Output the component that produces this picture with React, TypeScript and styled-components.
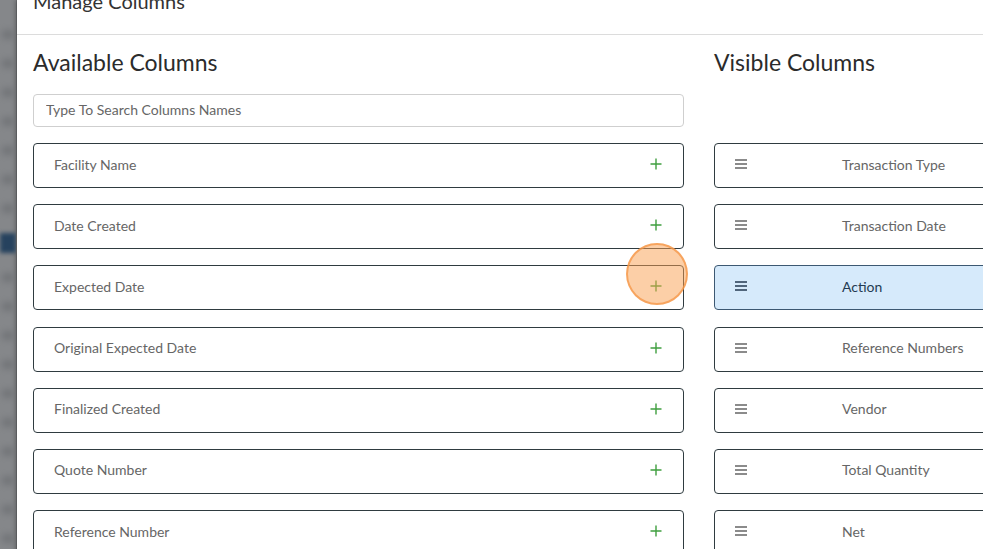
import React from "react";
import styled, { createGlobalStyle } from "styled-components";

const GlobalStyle = createGlobalStyle`
  html, body {
    margin: 0;
    padding: 0;
    height: 100%;
    overflow: hidden;
    background: #ffffff;
    font-family: Lato, "Open Sans", "Liberation Sans", sans-serif;
  }
`;

const Page = styled.div`
  display: grid;
  grid-template-columns: 17px 1fr;
  height: 549px;
  width: 983px;
  overflow: hidden;
`;

const Backdrop = styled.div`
  background: #85878a;
  border-right: 1px solid #707275;
  display: flex;
  flex-direction: column;
  gap: 20px;
  padding-top: 30px;
  overflow: hidden;
`;

const Smudge = styled.div<{ $dark?: boolean }>`
  flex: none;
  height: ${(p) => (p.$dark ? "20px" : "9px")};
  margin: ${(p) => (p.$dark ? "0" : "0 2px")};
  background: ${(p) => (p.$dark ? "#26425e" : "#6c6e72")};
  filter: blur(${(p) => (p.$dark ? "2px" : "3px")});
  opacity: ${(p) => (p.$dark ? 1 : 0.7)};
`;

const Modal = styled.div`
  background: #fff;
  box-shadow: -2px 0 4px rgba(0, 0, 0, 0.25);
  display: flex;
  flex-direction: column;
  min-width: 0;
`;

const Header = styled.div`
  height: 35px;
  box-sizing: border-box;
  border-bottom: 1px solid #dcdcdc;
  display: flex;
  align-items: flex-end;
  padding: 0 16px 21px;
`;

const Title = styled.h4`
  margin: 0;
  font-size: 20px;
  line-height: 24px;
  font-weight: 400;
  color: #333;
`;

const Body = styled.div`
  display: grid;
  grid-template-columns: 651px 651px;
  column-gap: 30px;
  padding: 13px 16px 0;
`;

const Column = styled.div`
  display: flex;
  flex-direction: column;
`;

const Heading = styled.h3`
  margin: 0;
  height: 46px;
  font-size: 23px;
  line-height: 28px;
  font-weight: 400;
  color: #2b2b2b;
`;

const Search = styled.input`
  box-sizing: border-box;
  height: 33px;
  margin-bottom: 16px;
  border: 1px solid #cfcfcf;
  border-radius: 4px;
  padding: 0 12px 3px;
  font-family: inherit;
  font-size: 14px;
  color: #555;
  outline: none;
  &::placeholder {
    color: #666;
  }
`;

const Spacer = styled.div`
  height: 49px;
`;

const List = styled.div`
  display: flex;
  flex-direction: column;
  gap: 16.2px;
`;

const Row = styled.div<{ $active?: boolean }>`
  position: relative;
  box-sizing: border-box;
  height: 45px;
  padding-bottom: 3px;
  border: 1px solid ${(p) => (p.$active ? "#3c5872" : "#2f3b40")};
  border-radius: 4px;
  background: ${(p) => (p.$active ? "#d6eafb" : "#fff")};
  display: flex;
  align-items: center;
  font-size: 14px;
  color: ${(p) => (p.$active ? "#243a52" : "#666")};
`;

const Label = styled.span`
  flex: 1;
  padding-left: 20px;
`;

const AddButton = styled.span`
  width: 54px;
  display: flex;
  justify-content: center;
`;

const Handle = styled.span`
  width: 127px;
  padding-left: 20px;
  box-sizing: border-box;
  display: flex;
  align-items: center;
`;

const Click = styled.div`
  position: absolute;
  right: -5px;
  top: -23px;
  width: 58px;
  height: 58px;
  border-radius: 50%;
  background: rgba(250, 160, 80, 0.5);
  border: 2px solid rgba(245, 150, 70, 0.75);
  pointer-events: none;
`;

const Plus = () => (
  <svg width="12" height="12" viewBox="0 0 12 12">
    <path d="M6 0.5v11M0.5 6h11" stroke="#3f9f3f" strokeWidth="1.4" />
  </svg>
);

const Bars = ({ color }: { color: string }) => (
  <svg width="12" height="10" viewBox="0 0 12 10">
    <path d="M0 1h12M0 5h12M0 9h12" stroke={color} strokeWidth="1.4" />
  </svg>
);

const available = [
  "Facility Name",
  "Date Created",
  "Expected Date",
  "Original Expected Date",
  "Finalized Created",
  "Quote Number",
  "Reference Number",
];

const visible = [
  "Transaction Type",
  "Transaction Date",
  "Action",
  "Reference Numbers",
  "Vendor",
  "Total Quantity",
  "Net",
];

export default function App() {
  return (
    <Page>
      <GlobalStyle />
      <Backdrop>
        {Array.from({ length: 18 }).map((_, i) => (
          <Smudge key={i} $dark={i === 7} />
        ))}
      </Backdrop>
      <Modal>
        <Header>
          <Title>Manage Columns</Title>
        </Header>
        <Body>
          <Column>
            <Heading>Available Columns</Heading>
            <Search placeholder="Type To Search Columns Names" />
            <List>
              {available.map((name, idx) => (
                <Row key={name}>
                  <Label>{name}</Label>
                  <AddButton>
                    <Plus />
                  </AddButton>
                  {idx === 2 && <Click />}
                </Row>
              ))}
            </List>
          </Column>
          <Column>
            <Heading>Visible Columns</Heading>
            <Spacer />
            <List>
              {visible.map((name) => {
                const active = name === "Action";
                return (
                  <Row key={name} $active={active}>
                    <Handle>
                      <Bars color={active ? "#243a52" : "#666"} />
                    </Handle>
                    <span>{name}</span>
                  </Row>
                );
              })}
            </List>
          </Column>
        </Body>
      </Modal>
    </Page>
  );
}
